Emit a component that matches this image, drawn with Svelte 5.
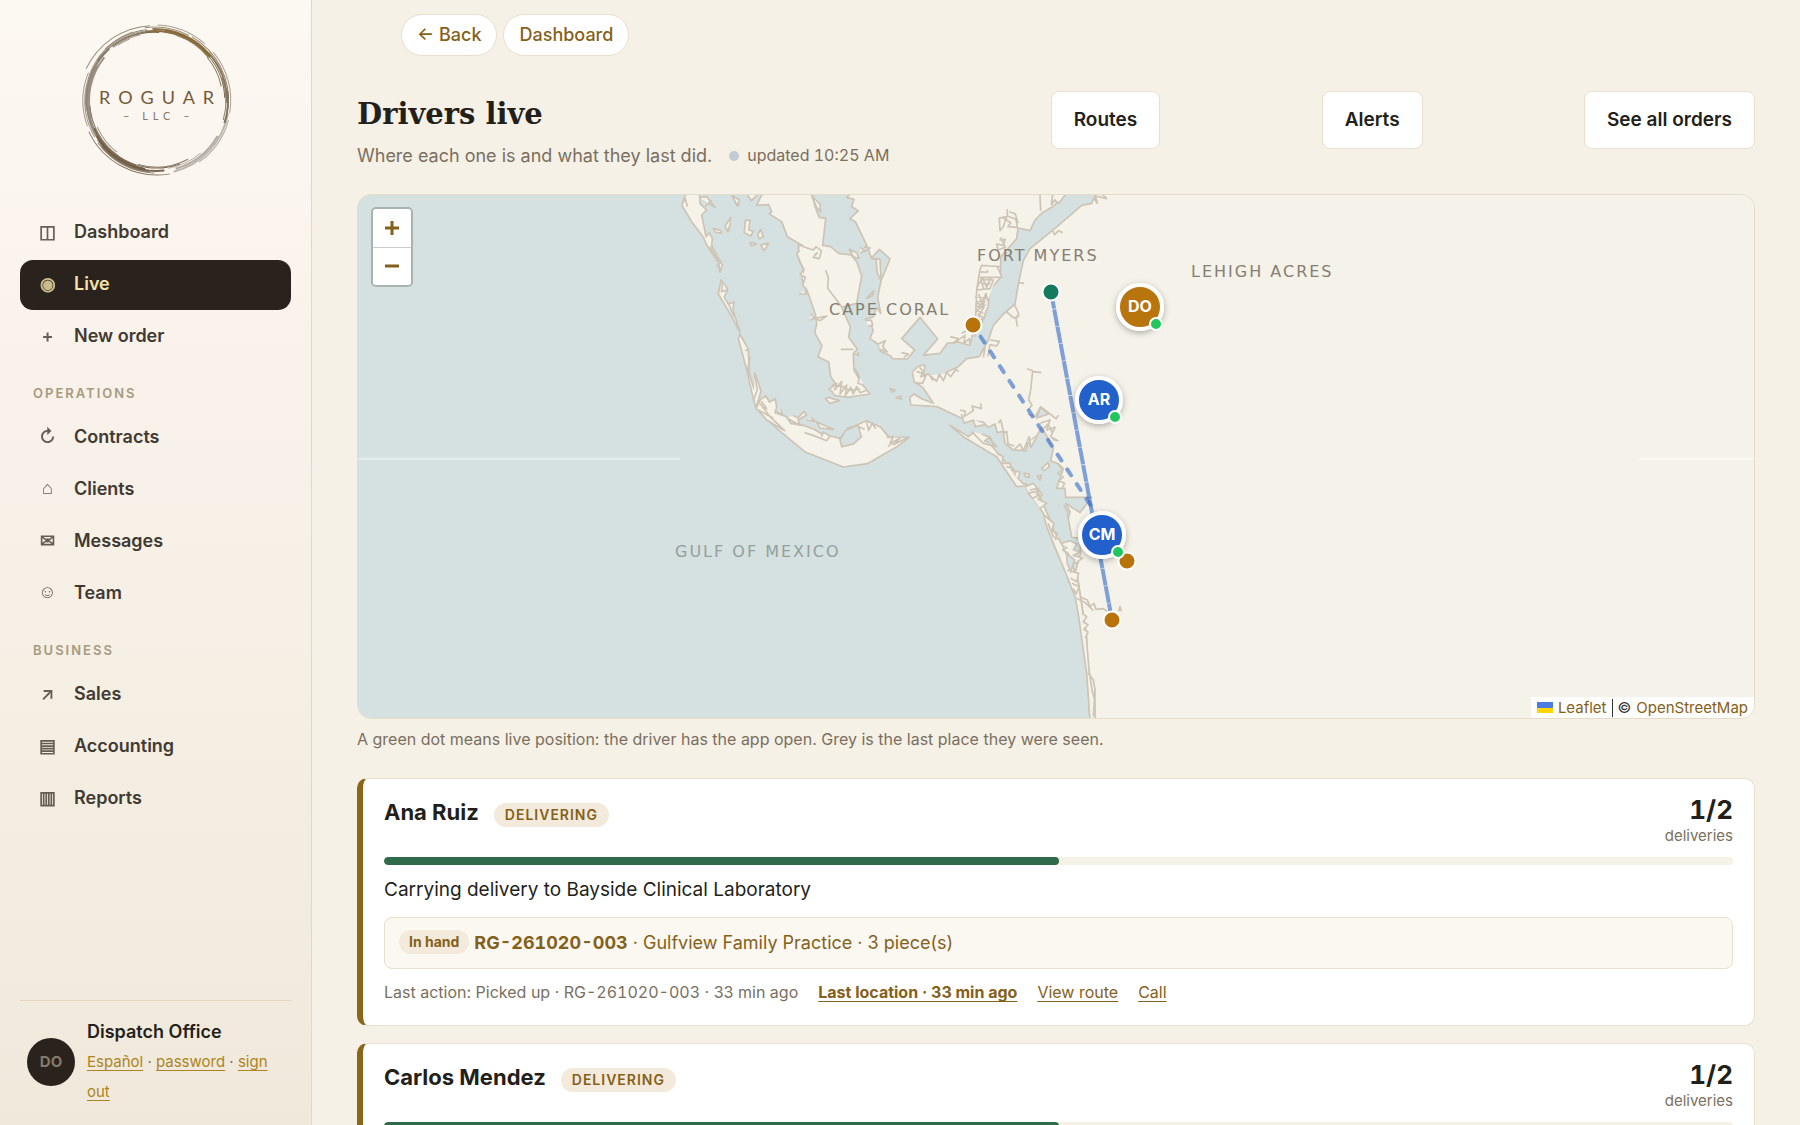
<script>
  const groups = [
    {
      title: '',
      items: [
        { icon: '◫', label: 'Dashboard' },
        { icon: '◉', label: 'Live', active: true },
        { icon: '+', label: 'New order' }
      ]
    },
    {
      title: 'Operations',
      items: [
        { icon: '↻', label: 'Contracts' },
        { icon: '⌂', label: 'Clients' },
        { icon: '✉', label: 'Messages' },
        { icon: '☺', label: 'Team' }
      ]
    },
    {
      title: 'Business',
      items: [
        { icon: '↗', label: 'Sales' },
        { icon: '▤', label: 'Accounting' },
        { icon: '▥', label: 'Reports' }
      ]
    }
  ];

  // Brush strokes of the logo ring: radius, start angle, sweep, width, colour
  const strokes = [
    [75, 205, 62, 1, '#8a7d6c'],
    [75, 272, 40, 1, '#a1978a'],
    [75, 320, 50, 1, '#a1978a'],
    [75, 15, 40, 1, '#a79f95'],
    [75, 80, 75, 1, '#7d6d59'],
    [75, 160, 42, 1, '#9b9083'],
    [73, 262, 36, 1, '#93866f'],
    [73, 300, 66, 1, '#84725a'],
    [73, 10, 66, 2, '#b5afa7'],
    [73, 92, 52, 1, '#8d8071'],
    [73, 150, 100, 1, '#9a9084'],
    [72, 96, 44, 2, '#7f705c'],
    [72, 172, 50, 2, '#8f8375'],
    [72, 352, 26, 2, '#75634c'],
    [71, 268, 52, 2, '#86693c'],
    [71, 318, 44, 2, '#7b6749'],
    [71, 30, 44, 2, '#aaa39a'],
    [71, 84, 62, 2, '#6a563e'],
    [71, 145, 82, 2, '#87796a'],
    [71, 226, 38, 1, '#8c7f6e'],
    [70, 278, 44, 2, '#7a5a25'],
    [70, 100, 50, 2, '#5f4b34'],
    [70, 150, 60, 2, '#8b7f73'],
    [70, 215, 50, 1, '#9b9184'],
    [70, 340, 36, 1, '#84755f'],
    [69, 262, 58, 2, '#7d6030'],
    [69, 320, 38, 1, '#6f5c42'],
    [69, 108, 48, 2, '#6b5842'],
    [69, 165, 54, 2, '#92877b'],
    [69, 215, 50, 1, '#766650'],
    [69, 50, 30, 1, '#b3aca3'],
    [68, 232, 42, 1, '#6a563a'],
    [68, 288, 34, 1, '#8a7448'],
    [68, 70, 56, 1, '#6d5c46'],
    [68, 125, 50, 1, '#7d6d5b'],
    [67, 232, 26, 1, '#98887a'],
    [67, 320, 28, 1, '#7c6a50'],
    [67, 62, 44, 1, '#7d6f5e'],
    [66, 128, 28, 1, '#8f8477'],
    [66, 236, 12, 1, '#a89c8d']
  ];

  const actions = ['Routes', 'Alerts', 'See all orders'];

  const places = [
    { name: 'FORT MYERS', x: 619, y: 66 },
    { name: 'CAPE CORAL', x: 471, y: 120 },
    { name: 'LEHIGH ACRES', x: 833, y: 82 }
  ];

  const stops = [
    { x: 693, y: 97, kind: 'pickup' },
    { x: 615, y: 130, kind: 'dropoff' },
    { x: 769, y: 366, kind: 'dropoff' },
    { x: 754, y: 425, kind: 'dropoff' }
  ];

  const people = [
    { initials: 'DO', x: 782, y: 112, kind: 'office' },
    { initials: 'AR', x: 741, y: 205, kind: 'driver' },
    { initials: 'CM', x: 744, y: 340, kind: 'driver' }
  ];

  const drivers = [
    {
      name: 'Ana Ruiz',
      status: 'Delivering',
      done: 1,
      total: 2,
      task: 'Carrying delivery to Bayside Clinical Laboratory',
      order: 'RG-261020-003',
      detail: 'Gulfview Family Practice · 3 piece(s)',
      last: 'Picked up',
      seen: '33 min ago'
    },
    {
      name: 'Carlos Mendez',
      status: 'Delivering',
      done: 1,
      total: 2,
      task: 'Carrying delivery to Bayside Clinical Laboratory',
      order: 'RG-261020-003',
      detail: 'Gulfview Family Practice · 3 piece(s)',
      last: 'Picked up',
      seen: '33 min ago'
    }
  ];
</script>

<div class="app">
  <aside>
    <svg class="logo" viewBox="0 0 156 156" role="img" aria-label="Roguar LLC">
      <g fill="none" opacity=".9">
        {#each strokes as [r, start, sweep, width, colour]}
          <circle
            cx="78"
            cy="78"
            {r}
            pathLength="360"
            stroke={colour}
            stroke-width={width}
            stroke-dasharray="{sweep} {360 - sweep}"
            transform="rotate({start} {start > 180 ? 77 : 79} 78)"
          />
        {/each}
      </g>
      <text class="brand" x="21" y="81">ROGUAR</text>
      <text class="sub" x="45" y="97">– LLC –</text>
    </svg>

    <nav aria-label="Main">
      {#each groups as group}
        {#if group.title}<h2>{group.title}</h2>{/if}
        {#each group.items as item}
          <a href="#{item.label}" class:active={item.active}>
            <span class="glyph" aria-hidden="true">{item.icon}</span>{item.label}
          </a>
        {/each}
      {/each}
    </nav>

    <footer>
      <span class="avatar">DO</span>
      <div>
        <strong>Dispatch Office</strong>
        <p><a href="#es">Español</a> · <a href="#password">password</a> · <a href="#signout">sign out</a></p>
      </div>
    </footer>
  </aside>

  <main>
    <div class="crumbs">
      <a href="#back">← Back</a>
      <a href="#dashboard">Dashboard</a>
    </div>

    <header>
      <div class="heading">
        <h1>Drivers live</h1>
        <p>Where each one is and what they last did. <span class="updated"><i></i>updated 10:25 AM</span></p>
      </div>
      {#each actions as action}
        <button type="button">{action}</button>
      {/each}
    </header>

    <section class="map" aria-label="Driver map">
      <svg viewBox="0 0 1396 523" preserveAspectRatio="xMidYMid slice">
        <defs>
          <filter id="lift" x="-40%" y="-40%" width="180%" height="190%">
            <feDropShadow dx="0" dy="2" stdDeviation="3" flood-color="#000" flood-opacity=".3" />
          </filter>
        </defs>
        <rect class="water" x="-400" y="-400" width="2200" height="1400" />

        <g class="coast" transform="translate(302 -5) scale(.33333)">
          <!-- west barrier islands -->
          <path d="M80 5L65 45L95 95L130 142L140 165L175 217L180 246L187 225L155 168L157 145L147 128L138 140L125 75L140 60L120 40L118 5Z" />
          <path d="M118 22L140 20L165 52L145 40M135 50L155 30M65 45L76 25L82 50M150 170L176 216M170 230L180 218" />
          <path d="M183 270L175 312L205 362L240 427L219 362L222 336L205 342L193 322L203 297Z" />
          <path d="M188 278L184 305L200 300M205 340L222 380" />
          <path d="M240 432L235 446L262 546L276 610L288 655L303 603L285 549L283 600L268 550L265 482Z" />
          <path d="M244 440L265 478L255 482M262 546L270 500M284 552L292 600L280 630" />
          <!-- sound islets -->
          <path d="M160 115L182 122L184 130L165 126ZM195 108L212 82L210 104L204 125ZM256 92L270 90L266 120L280 124L272 138L253 128ZM302 118L310 140L296 146L294 132ZM270 158L290 162L274 168ZM302 165L326 160L312 182ZM215 15L238 30L232 48ZM262 15L275 32L284 22L292 15M225 40L240 44" />
          <!-- Pine Island -->
          <path d="M325 5L305 15L290 46L326 44L335 66L328 72L365 95L382 140L430 168L415 166L418 214L432 238L426 268L442 304L466 372L470 402L464 428L486 468L474 500L506 516L512 560L526 580L512 600L524 616L562 622L630 612L606 582L582 540L580 490L592 478L566 442L571 410L545 352L590 340L605 258L590 215L574 195L536 190L512 170L488 166L497 85L478 82L465 50L455 5Z" />
          <path d="M455 18L480 42L482 66L470 52ZM497 240L505 262L503 295L545 350M430 170L460 180L468 170L484 182L478 206L460 202L472 188L462 196M418 182L410 190L420 214L430 240L420 254L436 262L428 286L440 300M418 312L440 312L434 300M452 370L462 386L500 378L480 392L462 384L450 392M542 478L580 478M580 490L596 496L592 486M585 535L598 560L594 580L612 586M505 600L530 580L524 600L545 574L540 612L560 585L556 618L572 592L580 612L590 590L600 608L622 600M496 626L510 640L538 632L505 622ZM515 585L550 590L566 600L600 598" />
          <path d="M568 178L590 188L597 206L580 200ZM600 172L612 180L602 190M620 325L642 302L636 318ZM612 172L632 170" />
          <!-- Sanibel -->
          <path d="M288 655L302 628L318 618L328 636L346 626L350 652L345 668L380 680L392 700L430 706L462 718L500 740L512 738L540 745L558 722L592 704L620 692L662 712L688 742L748 742L708 772L622 821L550 831L434 785L350 715Z" />
          <path d="M300 640L330 680L374 722L320 690L294 660L340 684M304 634L320 656L306 650M350 662L368 676L362 658M380 684L420 706L414 690L440 676L432 664L414 684L398 676M440 690L466 694L452 682M470 696L520 718L480 714ZM434 728L470 740L500 752L510 738L490 726L484 740M620 695L626 722L636 700L648 716M680 742L700 740L690 760L720 745L700 764L740 744M684 770L700 756M560 715L590 708L614 718" />
          <!-- Cape Coral -->
          <path d="M578 5L560 22L582 28L575 50L595 62L570 86L586 95L625 176L634 205L658 178L690 207L663 272L653 322L662 370L650 352L640 380L616 388L632 404L640 420L630 446L654 462L662 484L692 498L698 506L742 507L764 480L725 446L780 382L833 447L790 496L840 490L862 460L895 456L930 466L938 430L950 412L965 400L984 350L990 300L1022 262L1022 200L1040 180L1070 146L1074 114L1110 122L1125 90L1145 70L1175 52L1200 30L1225 5Z" />
          <path d="M634 205L648 208L652 250L663 272L660 208L646 206M626 178L612 186L632 172M618 392L634 390L638 406L624 408M655 462L676 452L668 470L682 486L660 478M724 488L745 492L732 502M1140 15L1142 62M1178 15L1174 44L1184 30L1196 40L1216 15" />
          <path d="M945 440L950 300L960 240L965 226L990 228L1020 230M950 300L990 296L1000 270L962 268L972 300M945 320L980 324L948 340L975 345L950 362L970 370M960 245L985 248L1018 250M968 280L988 282L982 240M945 350L972 352L955 378L962 398M956 312L966 340L978 310L984 334M870 440L895 446L880 460L915 436L912 460L928 446L930 464M905 430L925 420L920 396M952 290L968 262L980 292L994 262M948 330L962 352L976 332M954 372L972 386L952 392" />
          <path d="M1018 84L1040 80L1030 110L1020 122ZM1042 58L1042 78L1068 88L1072 112L1044 110L1052 98L1026 82M1048 65L1066 72L1074 100M1018 150L1036 148L1030 166L1010 162L1014 180L1036 172L1022 142M1012 230L1026 262L960 262" />
          <!-- mainland south and east of the river -->
          <path d="M1310 5L1295 40L1265 46L1185 115L1110 176L1090 212L1075 282L1065 342L1030 372L1000 406L985 450L958 500L920 506L895 530L862 545L850 560L830 558L818 570L806 552L790 556L795 525L775 528L757 546L762 575L788 592L820 640L785 626L762 612L750 622L752 645L832 650L898 682L920 690L970 696L985 712L1005 702L1012 728L1030 724L1035 760L1060 780L1098 782L1104 758L1130 738L1145 712L1164 745L1180 775L1172 812L1196 822L1210 836L1190 895L1215 895L1217 922L1295 922L1260 968L1217 940L1230 965L1225 985L1235 1042L1260 1045L1262 1090L1245 1150L1255 1176L1262 1222L1280 1340L1282 1450L1290 1590L4000 1590L4000 -800L1310 -800Z" />
          <path d="M1300 22L1312 40L1306 18L1340 26L1326 12M1176 118L1184 134L1196 122L1208 128M1075 278L1092 280M1062 340L1076 372L1068 384L1072 410M1040 366L1062 384L1078 378M990 450L1018 454L1010 468L990 464L984 500M975 472L970 502M810 556L830 574L838 552L850 572L860 548L872 560L888 538L896 545M778 530L790 545L782 560L798 556L788 580L764 578M770 545L792 550" />
          <path d="M1102 536L1118 542L1112 600L1106 630L1116 645L1104 660M1116 545L1144 547M1126 680L1142 650L1188 686L1196 676M1126 680L1104 672M1140 700L1170 690L1160 720L1185 712L1172 740L1194 752L1178 748M1150 716L1164 702L1178 730" />
          <path d="M900 660L916 664L912 680L940 662L936 648L964 656L962 640M904 672L912 700L940 690L946 710L976 704M1015 700L1022 690L1032 730L1040 724L1044 762L1062 768M1062 780L1080 762L1090 782L1108 740L1112 772L1130 742" />
          <!-- Estero Bay barrier islands -->
          <path d="M870 706L912 742L1010 800L1070 890L1096 888L1150 970L1160 1010L1180 1060L1210 1132L1246 1222L1256 1280L1280 1450L1290 1590L1306 1590L1304 1500L1288 1450L1278 1330L1262 1225L1252 1160L1205 1062L1180 1020L1168 985L1140 920L1120 890L1088 880L1062 850L1040 820L1018 795L990 762L960 740L940 728L925 740Z" />
          <path d="M935 725L970 760L1010 770L985 740L965 732M972 756L990 740L1000 764M1010 790L1030 800L1026 820L1050 820L1056 842L1080 846L1074 866M1040 830L1060 836L1066 856M1096 890L1120 880L1146 912L1134 928L1160 940L1140 955M1110 900L1130 896L1138 915L1118 925L1104 910L1128 904L1134 922M1152 975L1170 990L1182 1000L1176 1020L1192 1032L1186 1050M1164 1000L1180 1040L1200 1048" />
          <path d="M1195 822L1205 840L1194 850L1210 862L1196 872L1214 880L1208 892M1225 985L1222 965L1212 945M1205 1060L1230 1052L1250 1062L1240 1080L1262 1085L1240 1096L1268 1104L1246 1120L1230 1108L1224 1090L1208 1080L1222 1072M1216 1085L1228 1120L1244 1140M1222 1140L1256 1150L1250 1175L1232 1165M1236 1180L1258 1190L1248 1212L1240 1196M1262 1222L1282 1230L1290 1250L1302 1240L1308 1258L1330 1256L1342 1264M1250 1225L1278 1240L1300 1262M1376 1264L1380 1250L1384 1264M1266 1270L1280 1280L1270 1296L1284 1304L1272 1318L1284 1326L1276 1344M1285 1450L1300 1470L1305 1500L1300 1580M1290 1460L1296 1500L1304 1530" />
          <path d="M1145 835L1164 818L1168 830L1152 842ZM1132 858L1144 856L1140 870ZM1092 850L1106 852L1108 862L1096 860ZM690 596L706 600L696 606ZM708 624L722 618L724 627Z" />
        </g>
        <g class="inlet" transform="translate(302 -5) scale(.33333)">
          <path d="M540 750L556 722L594 706L604 740L580 762L545 770Z" />
          <path d="M1142 652L1166 672L1130 684Z" />
          <path d="M1220 1090L1244 1110L1232 1145L1222 1120Z" />
        </g>

        <path class="seam" d="M-400 264H322M1281 264H1800" />

        {#each places as place}
          <text class="place" x={place.x} y={place.y}>{place.name}</text>
        {/each}
        <text class="place sea" x="317" y="362">GULF OF MEXICO</text>

        <path class="route" d="M615 130L769 366" stroke-dasharray="7 10.6" stroke-dashoffset="-14" />
        <path class="route dense" d="M693 97L754 425" stroke-dasharray="17 .6" />

        {#each stops as stop}
          <circle class="stop {stop.kind}" cx={stop.x} cy={stop.y} r="8.5" />
        {/each}
        {#each people as person}
          <g filter="url(#lift)">
            <circle class="person {person.kind}" cx={person.x} cy={person.y} r="22" />
          </g>
          <text class="initials" x={person.x} y={person.y + 5}>{person.initials}</text>
          <circle class="online" cx={person.x + 16} cy={person.y + 17} r="6" />
        {/each}
      </svg>

      <div class="zoom">
        <button type="button" aria-label="Zoom in">
          <svg viewBox="0 0 16 16"><path d="M8 1V15M1 8H15" /></svg>
        </button>
        <button type="button" aria-label="Zoom out">
          <svg viewBox="0 0 16 16"><path d="M1 8H15" /></svg>
        </button>
      </div>
      <div class="credit">
        <svg viewBox="0 0 16 11"><path fill="#4c7be1" d="M0 0H16V6H0z" /><path fill="#ffd500" d="M0 6H16V11H0z" /></svg>
        <a href="#leaflet">Leaflet</a>
        <span></span>
        © <a href="#osm">OpenStreetMap</a>
      </div>
    </section>
    <p class="legend">A green dot means live position: the driver has the app open. Grey is the last place they were seen.</p>

    {#each drivers as driver}
      <article>
        <div class="top">
          <h3>{driver.name}</h3>
          <span class="badge status">{driver.status}</span>
          <div class="count"><b>{driver.done}/{driver.total}</b><small>deliveries</small></div>
        </div>
        <div class="bar"><div style="width: {(driver.done / driver.total) * 100}%"></div></div>
        <p class="task">{driver.task}</p>
        <div class="order">
          <span class="badge">In hand</span>
          <span><b class="code">{driver.order}</b> · {driver.detail}</span>
        </div>
        <div class="last">
          <span>Last action: {driver.last} · <span class="code">{driver.order}</span> · {driver.seen}</span>
          <a class="strong" href="#location">Last location · {driver.seen}</a>
          <a href="#route">View route</a>
          <a href="#call">Call</a>
        </div>
      </article>
    {/each}
  </main>
</div>

<style>
  :global(body) {
    background: #f6f1e6;
    color: #231f1a;
    font-family: Inter, 'Liberation Sans', sans-serif;
  }
  * {
    box-sizing: border-box;
  }
  h1, h2, h3, p {
    margin: 0;
  }
  button {
    font-family: inherit;
    cursor: pointer;
  }
  .app {
    display: flex;
    height: 100vh;
  }

  aside {
    flex: 0 0 312px;
    display: flex;
    flex-direction: column;
    padding: 23px 20px 18px;
    border-right: 1px solid #e2d9c3;
    background: linear-gradient(#fcf9f2, #f9f2eb 32%, #f5efe4 60%, #f0e8db);
  }
  .logo {
    width: 156px;
    height: 156px;
    margin: 0 auto 29px;
    flex: none;
  }
  .brand {
    font: 18px Lato, sans-serif;
    letter-spacing: 8px;
    fill: #745937;
  }
  .sub {
    font: 11px Lato, sans-serif;
    letter-spacing: 5px;
    fill: #857868;
  }
  nav {
    display: flex;
    flex-direction: column;
    gap: 2px;
    flex: 1;
  }
  nav a {
    display: flex;
    align-items: center;
    gap: 13px;
    height: 50px;
    flex: none;
    padding: 0 14px 4px;
    border-radius: 13px;
    color: #403a32;
    font-size: 18px;
    font-weight: 600;
    text-decoration: none;
  }
  nav a.active {
    background: #2a231d;
    color: #f3e3a9;
  }
  .glyph {
    width: 27px;
    text-align: center;
    opacity: .8;
  }
  nav h2 {
    padding: 19px 13px 8px;
    font-size: 13px;
    line-height: 20px;
    font-weight: 600;
    letter-spacing: 2px;
    text-transform: uppercase;
    color: #a69a80;
  }
  footer {
    display: flex;
    align-items: center;
    gap: 12px;
    padding: 16px 7px 0;
    border-top: 1px solid #e4d9bd;
  }
  .avatar {
    flex: none;
    width: 48px;
    height: 48px;
    border-radius: 50%;
    background: #2a231d;
    color: #85796a;
    font-size: 15px;
    font-weight: 700;
    line-height: 48px;
    text-align: center;
  }
  footer strong {
    display: block;
    font-size: 18px;
    font-weight: 600;
    line-height: 30px;
  }
  footer p {
    font-size: 15px;
    line-height: 30px;
    color: #857a6a;
  }
  footer p a {
    color: #ad8421;
    text-underline-offset: 3px;
  }

  main {
    flex: 1;
    min-width: 0;
    overflow-y: auto;
    scrollbar-width: none;
    padding: 14px 45px 46px;
  }
  .crumbs {
    display: flex;
    gap: 6px;
    padding-left: 44px;
    margin-bottom: 35px;
  }
  .crumbs a {
    padding: 0 15px;
    border: 1px solid #e9dfcc;
    border-radius: 21px;
    background: #fff;
    color: #84611a;
    font-size: 18px;
    font-weight: 500;
    line-height: 40px;
    text-decoration: none;
  }
  header {
    display: flex;
    justify-content: space-between;
    align-items: flex-start;
    margin-bottom: 20px;
  }
  h1 {
    font: bold 29px/46px 'DejaVu Serif', serif;
  }
  .heading p {
    display: flex;
    align-items: center;
    gap: 17px;
    font-size: 18px;
    line-height: 37px;
    color: #7a6f5f;
  }
  .updated {
    display: flex;
    align-items: center;
    gap: 8px;
    font-size: 16px;
    font-variant-numeric: tabular-nums;
  }
  .updated i {
    width: 10px;
    height: 10px;
    border-radius: 50%;
    background: #c3cad3;
  }
  header button {
    height: 58px;
    padding: 0 22px 2px;
    border: 1px solid #e9dfcc;
    border-radius: 8px;
    background: #fff;
    color: #231f1a;
    font-size: 19px;
    font-weight: 600;
  }

  .map {
    position: relative;
    height: 525px;
    border: 1px solid #e5dcc8;
    border-radius: 14px;
    overflow: hidden;
  }
  .map > svg {
    display: block;
    width: 100%;
    height: 100%;
  }
  .water {
    fill: #d5e1e0;
  }
  .coast path {
    fill: #f5f2e9;
    stroke: #cdc4b5;
    stroke-width: 5;
    stroke-linejoin: round;
  }
  .inlet path {
    fill: #d5e1e0;
    stroke: #cdc4b5;
    stroke-width: 5;
  }
  .seam {
    stroke: #fff;
    stroke-width: 2;
    opacity: .4;
  }
  .place {
    font: 16px 'DejaVu Sans', sans-serif;
    letter-spacing: 2px;
    fill: #857e72;
  }
  .sea {
    fill: #93a09f;
  }
  .route {
    fill: none;
    stroke: #2f68cb;
    stroke-width: 4;
    stroke-linecap: round;
    opacity: .6;
  }
  .dense {
    stroke-linecap: butt;
  }
  .stop {
    stroke: #fff;
    stroke-width: 2;
  }
  .pickup {
    fill: #147a5e;
  }
  .dropoff, .office {
    fill: #b8740a;
  }
  .driver {
    fill: #2160cc;
  }
  .person {
    stroke: #fff;
    stroke-width: 4;
  }
  .initials {
    font-size: 16px;
    font-weight: 700;
    fill: #fff;
    text-anchor: middle;
  }
  .online {
    fill: #22c55e;
    stroke: #fff;
    stroke-width: 2;
  }
  .zoom {
    position: absolute;
    top: 12px;
    left: 13px;
    width: 42px;
    border: 2px solid #a9b3b2;
    border-radius: 5px;
    overflow: hidden;
  }
  .zoom button {
    display: grid;
    place-items: center;
    width: 100%;
    height: 38px;
    padding: 0 0 1px;
    border: 0;
    background: #fff;
  }
  .zoom button + button {
    border-top: 1px solid #ccc;
  }
  .zoom svg {
    width: 16px;
    stroke: #84611a;
    stroke-width: 3;
  }
  .credit {
    position: absolute;
    right: 0;
    bottom: 0;
    display: flex;
    align-items: center;
    gap: 5px;
    padding: 0 6px;
    background: rgb(255 255 255 / .8);
    font-size: 15px;
    line-height: 21px;
    color: #333;
  }
  .credit svg {
    width: 16px;
  }
  .credit a {
    color: #84611a;
    text-decoration: none;
  }
  .credit span {
    width: 1px;
    height: 18px;
    background: #333;
  }
  .legend {
    margin: 5px 0 24px;
    font-size: 16px;
    line-height: 30px;
    color: #7a6f5f;
  }

  article {
    margin-bottom: 17px;
    padding: 15px 21px 18px;
    border: 1px solid #e9dfcc;
    border-left: 6px solid #8a651a;
    border-radius: 10px;
    background: #fff;
  }
  .top {
    display: flex;
    align-items: flex-start;
    gap: 15px;
    margin-bottom: 11px;
  }
  h3 {
    font-size: 22px;
    font-weight: 700;
    line-height: 36px;
  }
  .badge {
    padding: 0 10px;
    border-radius: 12px;
    background: #f3eadb;
    color: #84611a;
    font-size: 14px;
    font-weight: 700;
    line-height: 24px;
  }
  .status {
    margin-top: 9px;
    padding: 0 11px;
    font-weight: 600;
    letter-spacing: 1px;
    text-transform: uppercase;
  }
  .code {
    font-variant-numeric: tabular-nums;
  }
  .count {
    margin-left: auto;
    text-align: right;
  }
  .count b {
    display: block;
    font-size: 26px;
    font-variant-numeric: tabular-nums;
    line-height: 32px;
  }
  .count small {
    display: block;
    font-size: 15px;
    line-height: 20px;
    color: #7a6f5f;
  }
  .bar {
    height: 8px;
    border-radius: 4px;
    background: #f5f1e6;
    overflow: hidden;
  }
  .bar div {
    height: 100%;
    border-radius: 4px;
    background: #2f6b4a;
  }
  .task {
    margin: 9px 0 11px;
    font-size: 19px;
    line-height: 32px;
  }
  .order {
    display: flex;
    align-items: center;
    gap: 5px;
    height: 52px;
    padding: 0 14px 2px;
    border: 1px solid #e9e0cd;
    border-radius: 8px;
    background: #fbf8f1;
    color: #84611a;
    font-size: 18px;
  }
  .last {
    display: flex;
    gap: 20px;
    margin-top: 8px;
    font-size: 16px;
    line-height: 30px;
    color: #7a6f5f;
  }
  .last a {
    color: #84611a;
    text-underline-offset: 3px;
  }
  .last .strong {
    font-weight: 700;
  }
</style>
